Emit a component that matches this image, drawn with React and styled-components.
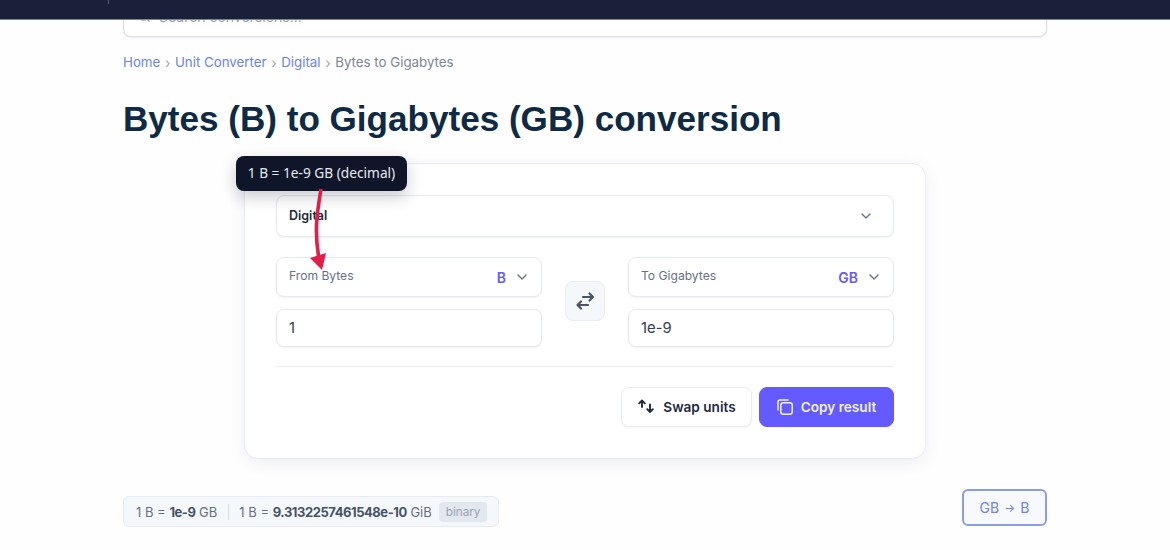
import React from 'react';
import styled, { createGlobalStyle } from 'styled-components';
import { ChevronDown, Search } from 'lucide-react';

const GlobalStyle = createGlobalStyle`
  html, body {
    margin: 0;
    padding: 0;
    background: #fefefe;
    font-family: Inter, "Liberation Sans", sans-serif;
    overflow: hidden;
  }
  * { box-sizing: border-box; }
`;

const TopBar = styled.div`
  position: absolute;
  top: 0;
  left: 0;
  right: 0;
  height: 19.5px;
  padding-left: 108px;
  background: #1a2038;
  border-bottom: 1px solid #7d8494;
  z-index: 5;
`;

const TopTick = styled.div`
  width: 1px;
  height: 4px;
  background: #565c72;
`;

const Page = styled.div`
  position: relative;
  width: 1170px;
  height: 550px;
  overflow: hidden;
`;

const Container = styled.div`
  width: 924px;
  margin: 0 auto;
`;

const SearchBox = styled.div`
  height: 44px;
  margin-top: -7px;
  border: 1px solid #d9dde6;
  border-radius: 8px;
  box-shadow: 0 1px 2px rgba(20, 30, 60, 0.08);
  background: #fff;
  display: flex;
  align-items: center;
  gap: 8px;
  padding: 2px 13px 0;
  color: #9aa3b2;
  font-size: 14px;
`;

const Crumbs = styled.nav`
  display: flex;
  align-items: center;
  margin-top: 16px;
  height: 18px;
  font-size: 13.3px;
`;

const Crumb = styled.a`
  color: #6b84e8;
`;

const CrumbCurrent = styled.span`
  color: #7c8596;
`;

const CrumbSep = styled.span`
  color: #a2a8b4;
  font-size: 14px;
  width: 14.7px;
  text-align: center;
`;

const Title = styled.h1`
  margin: 27px 0 0;
  font-family: "Liberation Sans", Arial, sans-serif;
  font-size: 35.1px;
  line-height: 42px;
  font-weight: 700;
  color: #0f2a44;
`;

const Card = styled.section`
  position: relative;
  width: 682px;
  margin: 23px 0 0 121px;
  padding: 31px;
  background: #fff;
  border: 1px solid #e8ebf4;
  border-radius: 14px;
  box-shadow: 0 4px 16px rgba(40, 50, 100, 0.08);
`;

const Tooltip = styled.div`
  position: absolute;
  left: -9px;
  top: -8px;
  height: 35px;
  width: 171px;
  padding-bottom: 3px;
  display: flex;
  align-items: center;
  justify-content: center;
  border-radius: 8px;
  background: #0f1629;
  color: #e6e9f0;
  font-family: "Noto Sans", sans-serif;
  font-size: 13.7px;
  box-shadow: 0 6px 16px rgba(15, 22, 41, 0.22);
  z-index: 3;
`;

const Pointer = styled.svg`
  position: absolute;
  left: 55px;
  top: 25px;
  z-index: 4;
`;

const Field = styled.div`
  display: flex;
  align-items: center;
  justify-content: space-between;
  height: ${(p) => p.$height}px;
  padding: 0 12px;
  background: #fff;
  border: 1px solid #e6eaf3;
  border-radius: 8px;
  box-shadow: 0 1px 2px rgba(40, 50, 100, 0.07);
`;

const CategoryName = styled.span`
  font-size: 12.5px;
  font-weight: 600;
  color: #1f2a3d;
  padding-bottom: 2px;
`;

const CategoryChevron = styled(ChevronDown)`
  color: #667085;
  margin-right: 7px;
`;

const UnitChevron = styled(ChevronDown)`
  color: #667085;
  margin-right: -1px;
`;

const Converter = styled.div`
  display: grid;
  grid-template-columns: 266px 1fr 266px;
  margin-top: 20px;
`;

const Column = styled.div`
  display: flex;
  flex-direction: column;
  gap: 12px;
`;

const UnitLabel = styled.span`
  font-size: 12.1px;
  color: #667085;
  margin-bottom: 3px;
`;

const UnitRight = styled.span`
  display: flex;
  align-items: center;
  gap: 8px;
`;

const UnitCode = styled.span`
  font-size: 14px;
  font-weight: 600;
  color: #635bff;
`;

const ValueText = styled.span`
  font-size: 14.8px;
  color: #333d4e;
`;

const SwapCell = styled.div`
  display: flex;
  justify-content: center;
  padding-top: 24px;
`;

const SwapIcon = styled.button`
  width: 40px;
  height: 40px;
  padding: 0;
  display: flex;
  align-items: center;
  justify-content: center;
  color: #475467;
  background: #f5f8fb;
  border: 1px solid #e8ecf4;
  border-radius: 8px;
`;

const Divider = styled.hr`
  margin: 19px 0 20px;
  border: 0;
  border-top: 1px solid #eceef3;
`;

const Actions = styled.div`
  display: flex;
  justify-content: flex-end;
  gap: 7px;
`;

const ActionButton = styled.button`
  height: 40px;
  display: flex;
  align-items: center;
  justify-content: center;
  gap: 8px;
  width: ${(p) => p.$width}px;
  padding: 0;
  border-radius: 8px;
  font-family: inherit;
  font-size: 13.6px;
  font-weight: 600;
  color: ${(p) => (p.$primary ? '#f3f3ff' : '#1f2a3d')};
  background: ${(p) => (p.$primary ? '#635bff' : '#fff')};
  border: 1px solid ${(p) => (p.$primary ? '#635bff' : '#e8ecf4')};
  box-shadow: 0 1px 2px rgba(40, 50, 100, 0.06);
`;

const Footer = styled.div`
  display: flex;
  justify-content: space-between;
  align-items: flex-start;
  margin-top: 30px;
`;

const RatePill = styled.div`
  margin-top: 7px;
  height: 31px;
  width: 376px;
  display: flex;
  align-items: center;
  padding: 0 12px;
  font-size: 13px;
  color: #667085;
  background: #f5f8fb;
  border: 1px solid #e6ebf3;
  border-radius: 6px;
  white-space: nowrap;
`;

const RateValue = styled.strong`
  font-weight: 700;
  letter-spacing: -0.45px;
  color: #475467;
`;

const RateSep = styled.span`
  flex: none;
  width: 1px;
  height: 16px;
  margin: 0 10px 0 11px;
  background: #d9dde4;
`;

const Badge = styled.span`
  flex: none;
  margin-left: 7px;
  padding: 0 7px;
  height: 20px;
  line-height: 20px;
  font-size: 11.7px;
  color: #98a2b3;
  background: #e3e7ef;
  border-radius: 4px;
`;

const ReverseLink = styled.a`
  width: 85px;
  height: 37px;
  display: flex;
  align-items: center;
  justify-content: center;
  gap: 5px;
  font-size: 14px;
  color: #6b84e8;
  background: #f7f9fd;
  border: 2px solid #8a9cea;
  border-radius: 6px;
`;

const ReverseArrow = styled.span`
  font-size: 11.5px;
`;

const SwapGlyph = () => (
  <svg width="20" height="20" viewBox="0 0 20 20" fill="none" stroke="currentColor" strokeWidth="2.2" strokeLinecap="round" strokeLinejoin="round">
    <path d="M8 6h10M14.5 2.5 18 6l-3.500 3.500" />
    <path d="M13 14H2.500M6 10.500 2.500 14 6 17.500" />
  </svg>
);

const UpDownGlyph = () => (
  <svg width="18" height="16" viewBox="0 0 18 16" fill="none" stroke="currentColor" strokeWidth="1.9" strokeLinecap="round" strokeLinejoin="round">
    <path d="M5 8V1.500M2.200 4.300 5 1.500l2.800 2.800" />
    <path d="M13 5.500V13M10.200 10.200 13 13l2.800-2.800" />
  </svg>
);

const CopyGlyph = () => (
  <svg width="16" height="16" viewBox="0 0 16 16" fill="none" stroke="currentColor" strokeWidth="1.500" strokeLinecap="round" strokeLinejoin="round">
    <rect x="3.800" y="3.800" width="11.400" height="11.400" rx="2.500" />
    <path d="M1 11V3a2 2 0 0 1 2-2h8" />
  </svg>
);

const App = () => {
  return (
    <Page>
      <GlobalStyle />
      <TopBar>
        <TopTick />
      </TopBar>
      <Container>
        <SearchBox>
          <Search size={14} />
          Search conversions...
        </SearchBox>
        <Crumbs>
          <Crumb>Home</Crumb>
          <CrumbSep>›</CrumbSep>
          <Crumb>Unit Converter</Crumb>
          <CrumbSep>›</CrumbSep>
          <Crumb>Digital</Crumb>
          <CrumbSep>›</CrumbSep>
          <CrumbCurrent>Bytes to Gigabytes</CrumbCurrent>
        </Crumbs>
        <Title>Bytes (B) to Gigabytes (GB) conversion</Title>
        <Card>
          <Tooltip>1 B = 1e-9 GB (decimal)</Tooltip>
          <Pointer width="40" height="84" viewBox="0 0 40 84">
            <path d="M21 0 C17 24 14 42 19 70" fill="none" stroke="#e11d48" strokeWidth="3.600" />
            <path d="M10 69 L26 64 L22 81 Z" fill="#e11d48" />
          </Pointer>
          <Field $height={42}>
            <CategoryName>Digital</CategoryName>
            <CategoryChevron size={16} />
          </Field>
          <Converter>
            <Column>
              <Field $height={40}>
                <UnitLabel>From Bytes</UnitLabel>
                <UnitRight>
                  <UnitCode>B</UnitCode>
                  <UnitChevron size={16} />
                </UnitRight>
              </Field>
              <Field $height={38}>
                <ValueText>1</ValueText>
              </Field>
            </Column>
            <SwapCell>
              <SwapIcon>
                <SwapGlyph />
              </SwapIcon>
            </SwapCell>
            <Column>
              <Field $height={40}>
                <UnitLabel>To Gigabytes</UnitLabel>
                <UnitRight>
                  <UnitCode>GB</UnitCode>
                  <UnitChevron size={16} />
                </UnitRight>
              </Field>
              <Field $height={38}>
                <ValueText>1e-9</ValueText>
              </Field>
            </Column>
          </Converter>
          <Divider />
          <Actions>
            <ActionButton $width={131}>
              <UpDownGlyph />
              Swap units
            </ActionButton>
            <ActionButton $primary $width={135}>
              <CopyGlyph />
              Copy result
            </ActionButton>
          </Actions>
        </Card>
        <Footer>
          <RatePill>
            <span>1 B = <RateValue>1e-9</RateValue> GB</span>
            <RateSep />
            <span>1 B = <RateValue>9.3132257461548e-10</RateValue> GiB</span>
            <Badge>binary</Badge>
          </RatePill>
          <ReverseLink>
            GB <ReverseArrow>→</ReverseArrow> B
          </ReverseLink>
        </Footer>
      </Container>
    </Page>
  );
};

export default App;
